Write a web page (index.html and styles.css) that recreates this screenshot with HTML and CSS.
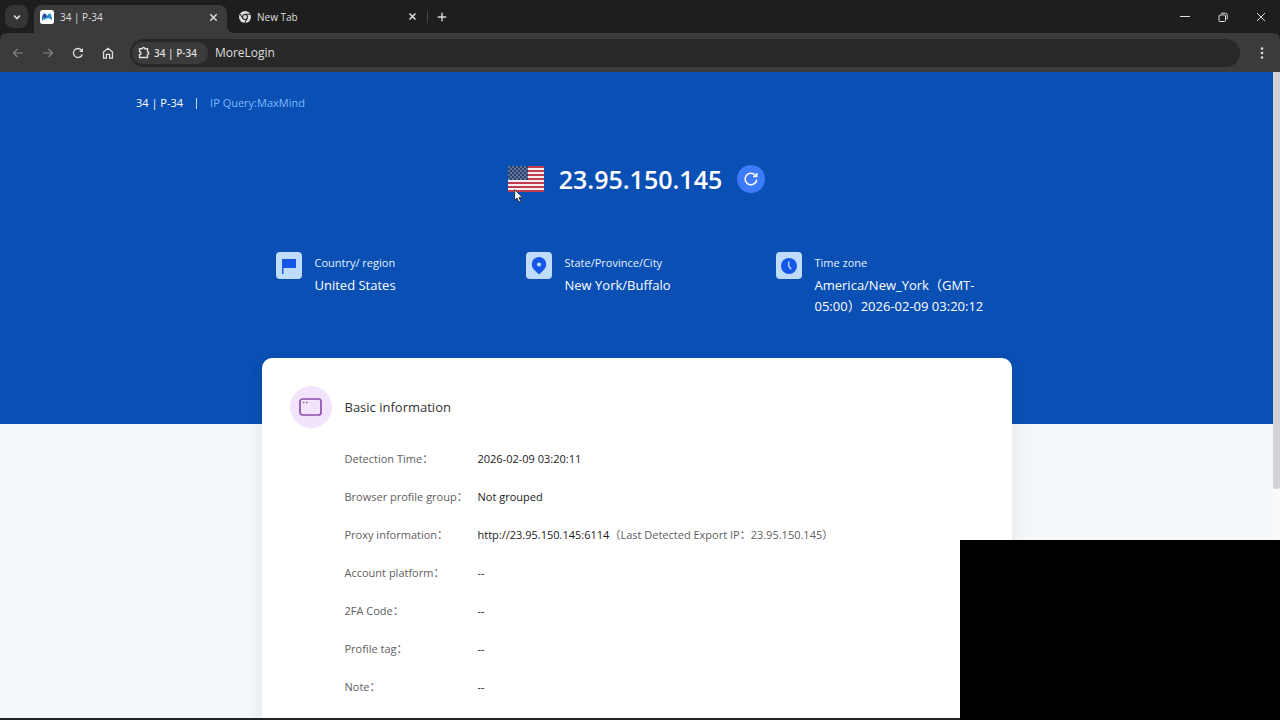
FILE: index.html
```html
<!DOCTYPE html>
<html lang="en">
<head>
<meta charset="utf-8">
<title>34 | P-34</title>
<link rel="stylesheet" href="styles.css">
</head>
<body>
<div class="browser">
  <header class="tabbar">
    <button class="tab-search" aria-label="Search tabs"><svg width="10" height="10" viewBox="0 0 10 10"><path class="line" d="M2 3.5l3 3 3-3" stroke-width="1.6"/></svg></button>
    <div class="tab tab-active">
      <svg class="favicon" width="14" height="14" viewBox="0 0 14 14"><rect width="14" height="14" rx="2.5" fill="#fff"/><path d="M2 10.500C2 6 3 3.500 4.700 3.500c1.300 0 1.800 2 2.600 2.700L5.500 9z" fill="#1d4fa8"/><path d="M12 10.500c0-4.500-1-7-2.600-7C8 3.500 7 7.500 4 9.500L7 8.400c2-.6 3.300.2 5 2.100z" fill="#2b8fd0"/><path d="M2 10.500c.5-2.300 1.500-3 3-3L4.500 9.500z" fill="#4bc3d6"/></svg>
      <span class="tab-title">34 | P-34</span>
      <button class="icon-btn" aria-label="Close tab"><svg width="9" height="9" viewBox="0 0 9 9"><path class="line" d="M1.300 1.300l6.400 6.400M7.700 1.300l-6.400 6.400" stroke-width="1.5"/></svg></button>
    </div>
    <div class="tab">
      <svg class="favicon" width="12" height="12" viewBox="0 0 12 12"><circle cx="6" cy="6" r="6" fill="#dcdcdc"/><path d="M6 3.300h5.300M3.700 7.300L1 2.800M8.300 7.300L5.700 12" stroke="#1d1e1d" stroke-width="1"/><circle cx="6" cy="6" r="2.900" fill="#1d1e1d"/><circle cx="6" cy="6" r="1.900" fill="#dcdcdc"/></svg>
      <span class="tab-title">New Tab</span>
      <button class="icon-btn" aria-label="Close tab"><svg width="9" height="9" viewBox="0 0 9 9"><path class="line" d="M1.500 1.500l6 6M7.500 1.500l-6 6" stroke-width="1.500"/></svg></button>
    </div>
    <div class="tab-divider"></div>
    <button class="icon-btn new-tab" aria-label="New tab"><svg width="10" height="10" viewBox="0 0 10 10"><path class="line" d="M5 .8v8.400M.8 5h8.400" stroke-width="1.400"/></svg></button>
    <div class="window-controls">
      <button class="icon-btn" aria-label="Minimize"><svg width="10" height="10" viewBox="0 0 10 10"><path class="line" d="M0 4.500h10"/></svg></button>
      <button class="icon-btn" aria-label="Restore"><svg width="10" height="10" viewBox="0 0 10 10"><rect class="line" x="1" y="3" width="6.500" height="6.500" rx="1"/><path class="line" d="M3 1.200h4.500q1.700 0 1.700 1.700v4.600"/></svg></button>
      <button class="icon-btn" aria-label="Close"><svg width="10" height="10" viewBox="0 0 10 10"><path class="line" d="M1 1l8 8M9 1l-8 8"/></svg></button>
    </div>
  </header>
  <div class="toolbar-wrap">
  <nav class="toolbar">
    <button class="icon-btn dim" aria-label="Back"><svg width="12" height="12" viewBox="0 0 12 12"><path class="line" d="M11 6H1.500M5.500 2l-4 4 4 4" stroke-width="1.200"/></svg></button>
    <button class="icon-btn dim" aria-label="Forward"><svg width="12" height="12" viewBox="0 0 12 12"><path class="line" d="M1 6h9.500M6.500 2l4 4-4 4" stroke-width="1.200"/></svg></button>
    <button class="icon-btn" aria-label="Reload"><svg width="12" height="12" viewBox="0 0 12 12"><path class="line" d="M10.300 7.200A4.500 4.500 0 1 1 9.500 3.200L10.500 4.300" stroke-width="1.300"/><path d="M11 1v3.900H7.100z" fill="currentColor"/></svg></button>
    <button class="icon-btn" aria-label="Home"><svg width="12" height="12" viewBox="0 0 12 12"><path class="line" d="M1.500 5L6 1.300 10.500 5v6.200H7.600V7.300H4.400v3.900H1.500z" stroke-width="1.300"/></svg></button>
    <form class="address">
      <span class="profile-chip"><svg width="12" height="13" viewBox="0 0 12 13"><path class="line" d="M1.500 2.800h2.700a1.300 1.300 0 0 1 2.600 0h2.700v3a1.300 1.300 0 0 1 0 2.700v3h-8V8.700a1.500 1.500 0 0 0 0-3z" stroke-width="1.400"/></svg>34 | P-34</span>
      <input class="address-input" type="text" value="MoreLogin" aria-label="Address">
    </form>
    <button class="icon-btn" aria-label="Menu"><svg width="4" height="14" viewBox="0 0 4 14"><circle cx="2" cy="2.500" r="1.300"/><circle cx="2" cy="7" r="1.300"/><circle cx="2" cy="11.500" r="1.300"/></svg></button>
  </nav>
  </div>
  <div class="viewport">
    <main class="page">
      <section class="hero">
        <div class="crumbs"><span>34 | P-34</span><i class="crumb-divider"></i><a class="crumb-link" href="#ip">IP Query:MaxMind</a></div>
        <div class="ip-line" id="ip">
          <div class="flag">
            <svg width="36" height="26" viewBox="0 0 36 26">
              <defs><pattern id="stars" width="4" height="4" patternUnits="userSpaceOnUse"><circle cx="1" cy="1" r=".65" fill="#cbd3e2"/><circle cx="3" cy="3" r=".65" fill="#cbd3e2"/></pattern></defs>
              <rect width="36" height="26" fill="#f4eef2"/>
              <path d="M0 1h36M0 5h36M0 9h36M0 13h36M0 17h36M0 21h36M0 25h36" stroke="#c23b4c" stroke-width="2"/>
              <rect width="20" height="14" fill="#2b416f"/><rect width="20" height="14" fill="url(#stars)"/>
            </svg>
            <svg class="cursor" width="10" height="14" viewBox="0 0 10 14"><path d="M.7.7v10.500l2.400-2.200 1.700 4 1.900-.8L5 8.400h3.500z" fill="#fff" stroke="#222" stroke-width=".8"/></svg>
          </div>
          <h1 class="ip">23.95.150.145</h1>
          <button class="refresh" aria-label="Refresh"><svg width="16" height="16" viewBox="0 0 16 16"><path class="line" d="M13.700 8.600A5.800 5.800 0 1 1 12.300 4.200L13.500 5.500" stroke-width="1.500"/><path class="line" d="M13.700 2v3.600h-3.600" stroke-width="1.500"/></svg></button>
        </div>
        <div class="facts">
          <div class="fact"><span class="fact-icon"><svg width="14" height="16" viewBox="0 0 14 16"><path d="M0 1h14v9H1.500v6H0z" fill="#1457e6"/></svg></span>
            <div><div class="fact-label">Country/ region</div><div class="fact-value">United States</div></div></div>
          <div class="fact"><span class="fact-icon"><svg width="16" height="18" viewBox="0 0 16 18"><path d="M8 17.500L2.800 12.400a7.300 7.300 0 1 1 10.400 0z" fill="#1457e6"/><circle cx="8" cy="7.500" r="2.100" fill="#bfdcfc"/></svg></span>
            <div><div class="fact-label">State/Province/City</div><div class="fact-value">New York/Buffalo</div></div></div>
          <div class="fact"><span class="fact-icon"><svg width="16" height="16" viewBox="0 0 16 16"><circle cx="8" cy="8" r="8" fill="#1457e6"/><path d="M7.800 3.500v4.700l2.400 3" fill="none" stroke="#bfdcfc" stroke-width="1.400"/></svg></span>
            <div><div class="fact-label">Time zone</div><div class="fact-value">America/New_York（GMT-<wbr>05:00）2026-02-09 03:20:12</div></div></div>
        </div>
      </section>
      <section class="card">
        <div class="card-head">
          <span class="card-icon"><svg width="23" height="18" viewBox="0 0 23 18"><rect x="1" y="1" width="21" height="16" rx="2.500" fill="none" stroke="#8a50ad" stroke-width="1.700"/><path d="M4 4.500h1.500M7 4.500h1.500" stroke="#8a50ad" stroke-width="1.300"/></svg></span>
          <h2 class="card-title">Basic information</h2>
        </div>
        <dl class="details">
          <dt>Detection Time：</dt><dd>2026-02-09 03:20:11</dd>
          <dt>Browser profile group：</dt><dd>Not grouped</dd>
          <dt>Proxy information：</dt><dd>http://23.95.150.145:6114<span class="muted">（Last Detected Export IP：23.95.150.145）</span></dd>
          <dt>Account platform：</dt><dd>--</dd>
          <dt>2FA Code：</dt><dd>--</dd>
          <dt>Profile tag：</dt><dd>--</dd>
          <dt>Note：</dt><dd>--</dd>
        </dl>
      </section>
    </main>
    <div class="scrollbar"><div class="scroll-thumb"></div></div>
  </div>
</div>
<div class="overlay"></div>
</body>
</html>
```
FILE: styles.css
```css
* { box-sizing: border-box; }
body {
  margin: 0;
  font-family: "Open Sans", "Noto Sans CJK SC", sans-serif;
  font-size: 11px;
  line-height: 18px;
  overflow: hidden;
}
button { border: 0; padding: 0; background: none; color: inherit; font: inherit; }
svg { display: block; flex: none; }
.line { fill: none; stroke: currentColor; }

.browser { display: flex; flex-direction: column; height: 100vh; }

.tabbar {
  display: flex;
  align-items: center;
  flex: none;
  height: 33px;
  padding-left: 5px;
  background: #1d1e1d;
  color: #dedede;
}
.tab-search {
  display: grid;
  place-items: center;
  width: 23px;
  height: 23px;
  margin-right: 6px;
  border-radius: 8px;
  background: #353535;
}
.tab {
  display: flex;
  align-items: center;
  gap: 6px;
  width: 200px;
  height: 28px;
  padding: 0 10px 0 12px;
  font-size: 10px;
}
.tab-active {
  position: relative;
  align-self: flex-end;
  width: 193px;
  padding: 0 9px 4px 6px;
  border-radius: 8px 8px 0 0;
  background: #3b3b3b;
}
.tab-active::after {
  content: "";
  position: absolute;
  left: 100%;
  bottom: 0;
  width: 8px;
  height: 8px;
  background: radial-gradient(circle at 100% 0, transparent 8px, #3b3b3b 8px);
}
.tab-title { flex: 1; }
.tab-divider { width: 1px; height: 12px; background: #454545; }
.icon-btn { display: grid; place-items: center; }
.new-tab { margin-left: 9px; }
.window-controls { display: flex; gap: 28px; margin-left: auto; padding-right: 14px; }

.toolbar-wrap { flex: none; background: #1d1e1d; }
.toolbar {
  display: flex;
  align-items: center;
  gap: 18px;
  height: 39px;
  padding: 0 16px 0 12px;
  border-radius: 7px 7px 0 0;
  background: #3b3b3b;
  color: #dedede;
  fill: #dedede;
}
.dim { color: #858585; }
.address {
  display: flex;
  align-items: center;
  flex: 1;
  gap: 7px;
  height: 28px;
  margin: 0 2px 0 -2px;
  padding-left: 2px;
  border-radius: 14px;
  background: #282828;
}
.profile-chip {
  display: flex;
  align-items: center;
  gap: 4px;
  height: 22px;
  padding: 0 11px 0 6px;
  border-radius: 11px;
  background: #3b3b3b;
  font-size: 10px;
  font-weight: 600;
}
.address-input {
  flex: 1;
  border: 0;
  padding: 0;
  background: none;
  color: #dedede;
  font: inherit;
  font-size: 12px;
}

.viewport {
  display: flex;
  flex: 1;
  min-height: 0;
  border-bottom: 2px solid #222;
}
.page { flex: 1; overflow: hidden; background: #f4f7fa; }
.scrollbar { width: 7px; background: #fafafa; }
.scroll-thumb { height: 417px; border-radius: 0 0 3px 3px; background: #d2d2d4; }

.hero {
  min-height: 352px;
  padding-top: 22px;
  background: #094fb4;
  color: #fff;
}
.crumbs { display: flex; align-items: center; gap: 13px; padding-left: 136px; }
.crumb-divider { width: 1px; height: 11px; background: #c3dcff; }
.crumb-link { color: #7db7ff; text-decoration: none; }
.ip-line {
  display: flex;
  align-items: center;
  justify-content: center;
  gap: 15px;
  margin-top: 49px;
  height: 36px;
}
.flag { position: relative; }
.cursor { position: absolute; left: 6px; top: 23px; }
.ip { margin: 0; font-size: 25px; font-weight: 600; line-height: 36px; }
.refresh {
  display: grid;
  place-items: center;
  width: 28px;
  height: 28px;
  border-radius: 50%;
  background: #3d7bfa;
}
.facts {
  display: grid;
  grid-template-columns: repeat(3, 1fr);
  max-width: 750px;
  margin: 55px auto 0;
}
.fact { display: flex; align-items: flex-start; gap: 13px; padding: 0 22px 0 14px; }
.fact-icon {
  display: grid;
  place-items: center;
  flex: none;
  width: 26px;
  height: 27px;
  border-radius: 4px;
  background: #bfdcfc;
}
.fact-label { line-height: 22px; color: #e6f1ff; }
.fact-value { font-size: 13px; line-height: 21px; margin-top: 1px; }

.card {
  max-width: 750px;
  min-height: 400px;
  margin: -66px auto 0;
  padding: 28px;
  border-radius: 10px;
  background: #fff;
  box-shadow: 0 4px 16px rgba(0, 0, 0, .08);
}
.card-head { display: flex; align-items: center; gap: 13px; }
.card-icon {
  display: grid;
  place-items: center;
  width: 42px;
  height: 42px;
  border-radius: 50%;
  background: #f1e4fc;
}
.card-title { margin: 0; color: #333; font-size: 13px; font-weight: 400; }
.details {
  display: grid;
  grid-template-columns: 133px 1fr;
  row-gap: 20px;
  margin: 22px 0 0;
  padding-left: 55px;
  color: #222;
}
.details dt { color: #606060; white-space: nowrap; }
.details dd { margin: 0; }
.muted { color: #606060; }

.overlay { position: fixed; right: 0; bottom: 0; width: 25vw; height: 25vh; background: #000; }
```
